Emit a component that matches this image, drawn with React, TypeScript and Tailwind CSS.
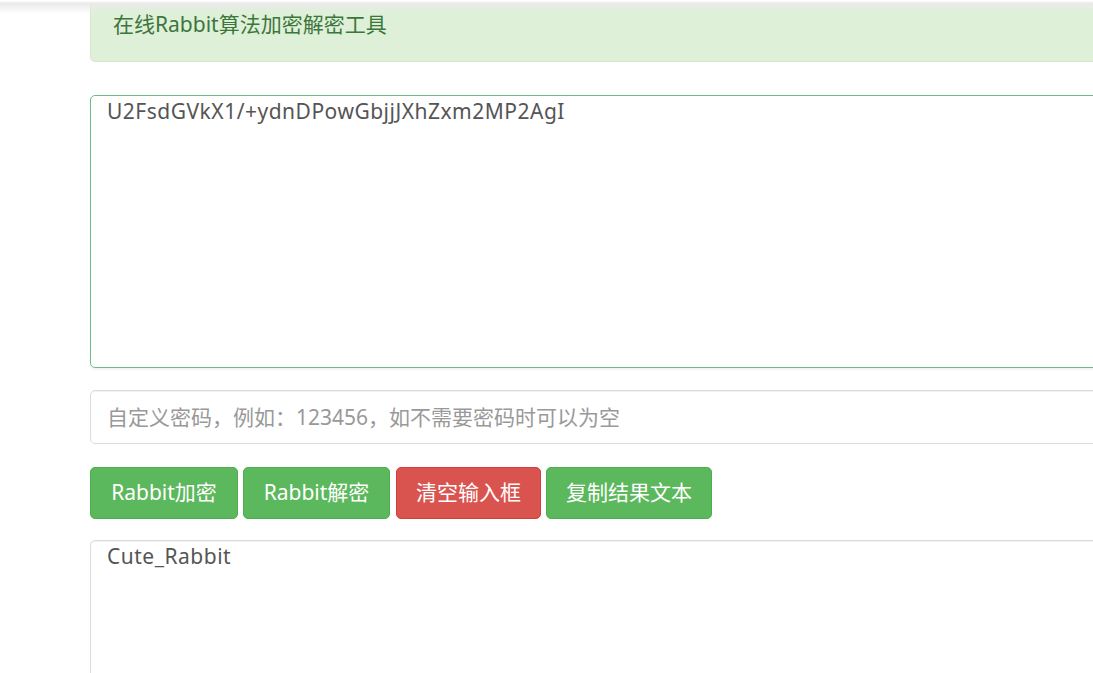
import { useState } from "react";

const font = "font-['Noto_Sans','Noto_Sans_CJK_SC',sans-serif]";

function App() {
	const [cipher, setCipher] = useState("U2FsdGVkX1/+ydnDPowGbjjJXhZxm2MP2AgI");
	const [pass, setPass] = useState("");
	const [plain, setPlain] = useState("Cute_Rabbit");

	return (
		<div className={`relative min-h-[673px] overflow-hidden bg-white ${font}`}>
			{/* navbar shadow at the top */}
			<div className="absolute left-0 right-0 top-0 z-10 h-[14px] bg-gradient-to-b from-white from-[6%] via-[#eaeaea] via-[22%] to-transparent" />

			<div className="ml-[90px] w-[1040px]">
				<div className="rounded-b-[5px] border border-t-0 border-[#d6e9c6] bg-[#dff0d8] pb-[22px] pl-[22px] pt-[9px] text-[21px] leading-[30px] text-[#3c763d]">
					在线Rabbit算法加密解密工具
				</div>

				<textarea
					value={cipher}
					onChange={(e) => setCipher(e.target.value)}
					className="mt-[33px] block h-[273px] w-full resize-none rounded-[5px] border border-solid border-[#6cbf84] bg-white px-[16px] pt-[0px] text-[21px] leading-[30px] tracking-[0.5px] text-[#555] shadow-[0_2px_3px_rgba(0,0,0,0.05)] outline-none"
				/>

				<input
					value={pass}
					onChange={(e) => setPass(e.target.value)}
					placeholder="自定义密码，例如：123456，如不需要密码时可以为空"
					className="mt-[22px] block h-[54px] w-full rounded-[5px] border border-solid border-[#dcdcdc] bg-white px-[16px] text-[21px] text-[#555] shadow-[inset_0_1px_1px_rgba(0,0,0,0.06)] outline-none placeholder:text-[#999]"
				/>

				<div className="mt-[23px] flex gap-[5px]">
					<button className="h-[52px] w-[148px] rounded-[5px] border border-[#4cae4c] bg-[#5cb85c] text-[21px] text-white">
						Rabbit加密
					</button>
					<button className="h-[52px] w-[147px] rounded-[5px] border border-[#4cae4c] bg-[#5cb85c] text-[21px] text-white">
						Rabbit解密
					</button>
					<button className="ml-[1px] h-[52px] w-[145px] rounded-[5px] border border-[#d43f3a] bg-[#d9534f] text-[21px] text-white">
						清空输入框
					</button>
					<button className="h-[52px] w-[166px] rounded-[5px] border border-[#4cae4c] bg-[#5cb85c] text-[21px] text-white">
						复制结果文本
					</button>
				</div>

				<textarea
					value={plain}
					onChange={(e) => setPlain(e.target.value)}
					className="mt-[21px] block h-[273px] w-full resize-none rounded-[5px] border border-solid border-[#dcdcdc] bg-white px-[16px] pt-[0px] text-[21px] leading-[30px] tracking-[0.5px] text-[#555] shadow-[inset_0_1px_1px_rgba(0,0,0,0.06)] outline-none"
				/>
			</div>
		</div>
	);
}

export default App;
